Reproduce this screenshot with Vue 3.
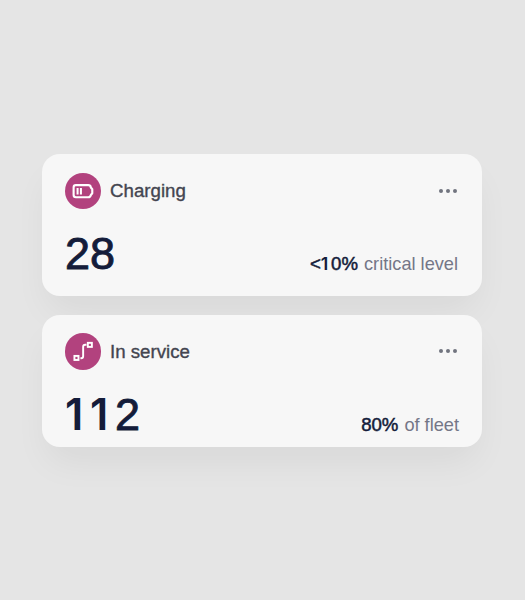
<template>
  <main class="board">
    <section
      v-for="card in cards"
      :key="card.id"
      class="card"
      :class="card.id"
    >
      <header class="card-header">
        <span class="icon">
          <svg v-if="card.id === 'charging'" viewBox="0 0 36 36" fill="none">
            <path
              d="M10.7 12H22.9Q25.2 12 25.5 14.3L26.9 16V20L25.5 21.7Q25.1 23.9 22.9 23.9H10.7Q8.5 23.9 8.5 21.8V14.2Q8.5 12 10.7 12Z"
              stroke="#fff"
              stroke-width="2.1"
              stroke-linejoin="round"
            />
            <path d="M12.4 14.8V21.2M15.7 14.8V21.2" stroke="#fff" stroke-width="2" />
          </svg>
          <svg v-else viewBox="0 0 36 36" fill="none" stroke="#fff" stroke-width="1.9">
            <rect x="9.3" y="22.6" width="4" height="4" />
            <rect x="22.5" y="9.7" width="4" height="4" />
            <path d="M15.2 24.9H15.9Q17.9 24.9 17.9 22.9V13.6Q17.9 11.6 19.9 11.6H21.2" />
          </svg>
        </span>
        <h2 class="title">{{ card.title }}</h2>
        <button class="more" aria-label="More options">
          <i></i><i></i><i></i>
        </button>
      </header>
      <div class="card-body">
        <div class="value">
          <span
            v-for="(char, i) in card.value"
            :key="i"
            :class="{ one: char === '1' }"
          >{{ char }}</span>
        </div>
        <p class="note">
          <strong><span
            v-for="(char, i) in card.share"
            :key="i"
            :class="{ one: char === '1' }"
          >{{ char }}</span></strong>
          <span>{{ card.note }}</span>
        </p>
      </div>
    </section>
  </main>
</template>

<script setup>
const cards = [
  { id: 'charging', title: 'Charging', value: '28', share: '<10%', note: 'critical level' },
  { id: 'service', title: 'In service', value: '112', share: '80%', note: 'of fleet' }
];
</script>

<style>
body {
  background: #e5e5e5;
}
</style>

<style scoped>
.board {
  box-sizing: border-box;
  min-height: 600px;
  padding: 154.3px 43px 0 42px;
  display: flex;
  flex-direction: column;
  gap: 19px;
  font-family: "Liberation Sans", Arial, sans-serif;
  font-kerning: none;
}

.card {
  box-sizing: border-box;
  padding: 18px 24px 0 22.5px;
  border-radius: 18px;
  background: #f7f7f7;
  box-shadow: 0 20px 36px -6px rgba(0, 0, 0, 0.06);
}

.charging {
  height: 141.7px;
}

.service {
  height: 131.7px;
  padding-right: 23px;
}

.card-header {
  display: flex;
  align-items: center;
  height: 37px;
}

.icon {
  width: 36.5px;
  height: 36.5px;
  border-radius: 50%;
  background: #b2427e;
}

.icon svg {
  display: block;
}

.title {
  margin: 1px 0 0 9px;
  font-size: 18.7px;
  font-weight: 400;
  color: #434550;
  -webkit-text-stroke: 0.35px #434550;
}

.more {
  display: flex;
  gap: 3px;
  margin-left: auto;
  margin-right: 1px;
  padding: 0;
  border: 0;
  background: none;
}

.service .more {
  margin-right: 2px;
}

.more i {
  width: 4px;
  height: 4px;
  border-radius: 50%;
  background: #71747f;
}

.card-body {
  display: flex;
  justify-content: space-between;
  align-items: flex-start;
  margin-top: 18px;
}

.value {
  display: flex;
  align-items: baseline;
  padding-left: 0.4px;
  font-size: 45px;
  line-height: 52px;
  color: #141c3a;
  -webkit-text-stroke: 0.9px #141c3a;
}

.charging .value {
  padding-top: 1px;
}

/* Inter draws the digit one without a foot */
.one {
  display: inline-block;
  width: 0.579em;
  font-family: Inter, "Liberation Sans", sans-serif;
  font-size: 0.96em;
  font-weight: 600;
  -webkit-text-stroke: 0;
}

.note {
  display: flex;
  align-items: baseline;
  gap: 6px;
  margin: 27px 0 0;
  font-size: 18.2px;
  line-height: 20px;
  color: #747687;
  white-space: nowrap;
}

.note strong {
  font-size: 18.6px;
  font-weight: 400;
  color: #141c3a;
  -webkit-text-stroke: 0.5px #141c3a;
}
</style>
